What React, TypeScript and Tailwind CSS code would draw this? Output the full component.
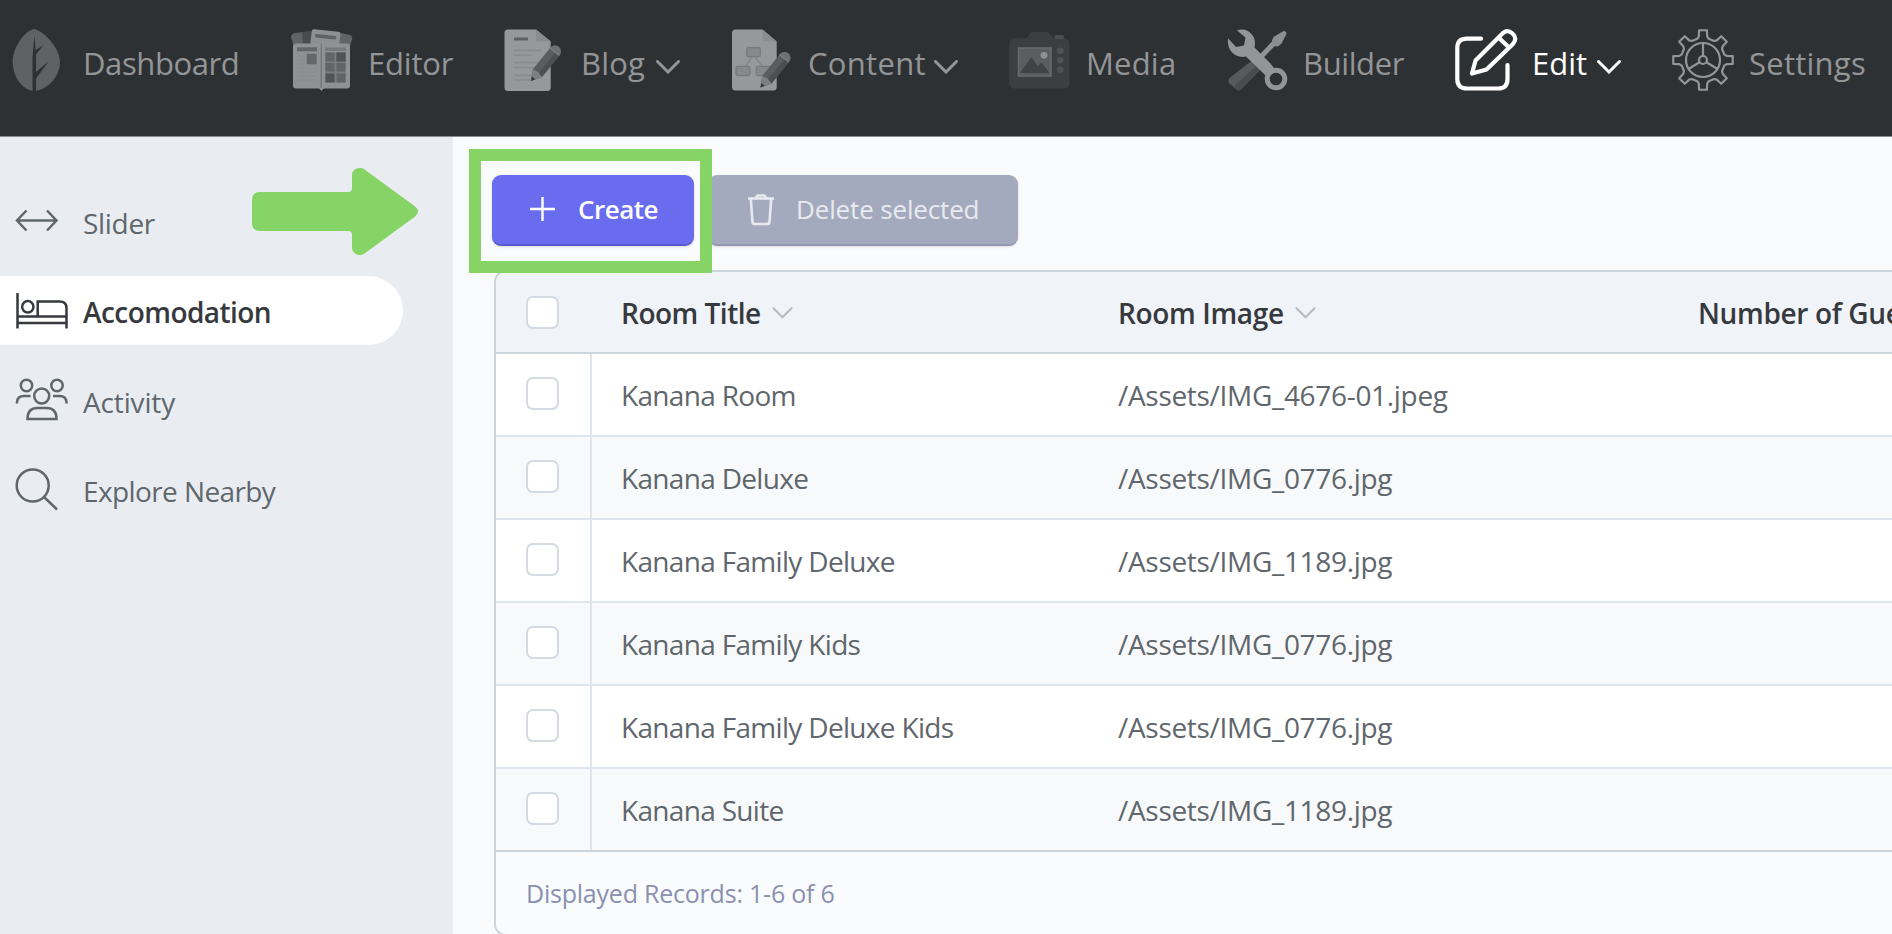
import type { ReactNode } from "react";

function Chevron({ className, weight = 3 }: { className?: string; weight?: number }) {
  return (
    <svg viewBox="0 0 24 14" fill="none" stroke="currentColor" strokeLinecap="round" className={className}>
      <path d="M1.5 1.5 12 12 22.500 1.5" strokeWidth={weight} />
    </svg>
  );
}

function Pencil({ x, y }: { x: number; y: number }) {
  return (
    <g transform={`translate(${x} ${y}) rotate(39)`}>
      <path d="M0 0 -6 -10V-38a6 6 0 0 1 12 0V-10Z" fill="#5b5c5f" />
      <path d="M1 -10V-38h5V-10Z" fill="#4d4e51" />
      <path d="M-6 -38a6 6 0 0 1 12 0Z" fill="#6f7073" />
      <path d="M-6 -37.500h12" stroke="#86878a" strokeWidth="1" />
      <path d="M0 0 -6 -10 0 -11.500 6 -10Z" fill="#7d7e81" />
      <path d="M0 0 -2.200 -4h4.400Z" fill="#333538" />
    </g>
  );
}

const leaf = (
  <path d="M28 1C38 3 54 20 54 34 54 48 43 60 30 63V50.500L43 33 30 44V26.500L37 17.500 29.600 22 28.300 7.500 26.500 30V63C15 60 6.700 48 6.700 34 6.700 20 18 3 28 1Z" fill="#606163" />
);

const editor = (
  <>
    <path d="M0 9Q0 6 4 5L18 3.500V17H2.500Z" fill="#626366" />
    <path d="M11 4.200 20 3V17H12Z" fill="#4a4b4e" />
    <path d="M48 4.500 59 7q2.500 1 2.200 4L59 18H48Z" fill="#626366" />
    <rect x="20" y="2.500" width="29" height="16" rx="2.500" fill="#8e8f91" transform="rotate(6 34 10)" />
    <rect x="24" y="7" width="21" height="3.500" rx="1" fill="#606164" transform="rotate(6 34 9)" />
    <rect x="2" y="15.500" width="57" height="45" rx="3" fill="#909193" />
    <path d="M28 60h5l-2.500 3Z" fill="#949597" />
    <path d="M30.300 15.500V60" stroke="#77787a" strokeWidth="1.500" />
    <rect x="6" y="19.300" width="20" height="4" fill="#656669" />
    <rect x="15.700" y="25.800" width="10" height="10.500" fill="#656669" />
    <path d="M6 28h8M6 32h8M6 36h8M6 40h20M6 44h20M6 48h20M6 52h20" stroke="#898a8c" strokeWidth="1" />
    <rect x="34" y="19.500" width="21" height="3.300" fill="#77787a" />
    <path d="M34 24.500h21v30h-21z" fill="#7c7d80" />
    <path d="M34.500 24.500h9v9h-9zM45.500 24.500h9v9h-9zM45.500 35h9v8.500h-9zM34.500 35h9v8.500h-9zM45.500 45.500h9v9h-9z" fill="#636467" />
    <path d="M34.500 45.500h9v9h-9zM45.500 24.500h9v9h-9z" fill="#525356" />
  </>
);

const blog = (
  <>
    <path d="M4 1.500H32L46.700 13.500V59.500a3.500 3.500 0 0 1-3.500 3.500H4A3.500 3.500 0 0 1 .5 59.500V5A3.500 3.500 0 0 1 4 1.500Z" fill="#979899" />
    <path d="M32 1.500V11q0 2.500 2.500 2.500H46.700Z" fill="#8b8c8e" />
    <path d="M10 11h14" stroke="#5f6062" strokeWidth="3" />
    <path d="M10 22.300h28M10 27.300h18M10 34.700h24M10 39.700h20M10 47.300h18M10 52h18" stroke="#8a8b8d" strokeWidth="1.700" />
    <Pencil x={27} y={53} />
  </>
);

const content = (
  <>
    <path d="M4.500 1.500H31.500L45.700 13.500V59a3.500 3.500 0 0 1-3.500 3.500H4.500A3.500 3.500 0 0 1 1 59V5A3.500 3.500 0 0 1 4.500 1.500Z" fill="#979899" />
    <path d="M31.500 1.500V11q0 2.500 2.500 2.500H45.700Z" fill="#8b8c8e" />
    <path d="M21 29 14 39M24 29 32 39" stroke="#7d7e80" strokeWidth="1.200" />
    <g fill="#87888a" stroke="#77787a" strokeWidth="1.200">
      <rect x="15.700" y="19.700" width="13.600" height="9" rx="1.800" />
      <rect x="5" y="38.300" width="14" height="9.300" rx="1.800" />
      <rect x="25.300" y="38.300" width="14" height="9.300" rx="1.800" />
    </g>
    <Pencil x={29.5} y={59.500} />
  </>
);

const media = (
  <>
    <path d="M6 10.300H17.500L21 5.500Q22 4 24 4H37.500Q39.500 4 40.500 5.500L44 10.300H54.500Q60.500 10.300 60.500 16V54.500Q60.500 60.500 54.500 60.500H6Q.3 60.500 .3 54.500V16Q.3 10.300 6 10.300Z" fill="#3d3e40" />
    <rect x="45.500" y="7" width="9.500" height="4" rx="1.500" fill="#4c4d4f" />
    <rect x="9.500" y="20" width="32.500" height="28" fill="#5c5d60" stroke="#68696b" strokeWidth="1.600" />
    <circle cx="35" cy="27.300" r="3.400" fill="#909193" />
    <path d="M11 45 22.500 29 29 38.500 32.500 34.500 40.500 45Z" fill="#414244" />
    <g fill="#505153">
      <circle cx="51.300" cy="22.700" r="3.300" />
      <circle cx="51.300" cy="32.200" r="3.300" />
      <circle cx="51.300" cy="41.500" r="3.300" />
    </g>
  </>
);

const builder = (
  <>
    <path d="M28 31 37 39 15.500 61q-2.500 2.500-5 .5L3.500 55.500q-2.500-2.500 0-5.500Z" fill="#58595b" />
    <path d="M33 35.500 37 39 15.500 61q-2.500 2.500-5 .5L7 59Z" fill="#4a4b4d" />
    <path d="M32 32 50 13" stroke="#919294" strokeWidth="5" />
    <path d="M46 12.500 47.500 9 57.500 3Q60.500 3 60.500 6L55.500 15.500 52 18.500 47.500 18Z" fill="#8d8e90" />
    <path d="M11 2.500C20 -1 29.500 6 29 16L28.500 19.500 44 35 48 40 40 48 34 42 20 28.500C10 31 .5 23 2 10.500L5 13.500 10 19 18 17.500 19.500 9.500 11 2.500Z" fill="#949597" />
    <circle cx="50" cy="51" r="8.800" fill="none" stroke="#949597" strokeWidth="5" />
  </>
);

const edit = (
  <g fill="none" stroke="currentColor" strokeWidth="4.200" strokeLinecap="round" strokeLinejoin="round">
    <path d="M26 10.700H12Q2.300 10.700 2.300 20V51Q2.300 60.500 12 60.500H43Q52.500 60.500 52.500 51V37" />
    <path d="M17 45.500 20.500 32.500 47 6Q52 .5 57.500 5.500 63 10.500 57.500 16.500L31.500 41.500Z" />
    <path d="M44 10 53.500 19" />
  </g>
);

const gearOutline = (() => {
  const parts: string[] = [];
  const at = (r: number, deg: number) => {
    const a = ((deg - 90) * Math.PI) / 180;
    return `${(31 + r * Math.cos(a)).toFixed(2)} ${(32 + r * Math.sin(a)).toFixed(2)}`;
  };
  for (let i = 0; i < 8; i++) {
    const c = i * 45;
    parts.push(`${i ? "L" : "M"}${at(22, c - 15)}L${at(24, c - 10)}L${at(30, c - 7.5)}L${at(30, c + 7.5)}L${at(24, c + 10)}L${at(22, c + 15)}`);
  }
  return parts.join("") + "Z";
})();

const settings = (
  <g fill="none" stroke="currentColor" strokeWidth="2.200" strokeLinejoin="round">
    <path d={gearOutline} />
    <circle cx="31" cy="32" r="17" />
    <circle cx="31" cy="32" r="4" />
    <path d="M31 15V28M27.500 34.200 16.500 41M34.500 34.200 45.500 41" />
  </g>
);

interface NavItem {
  label: string;
  icon: ReactNode;
  slot: string;
  text: string;
  chevron?: string;
  active?: boolean;
}

const navItems: NavItem[] = [
  { label: "Dashboard", icon: leaf, slot: "w-[285px]", text: "tracking-[-0.4px]" },
  { label: "Editor", icon: editor, slot: "w-[213px]", text: "tracking-[-0.2px]" },
  { label: "Blog", icon: blog, slot: "w-[227px]", text: "tracking-[0.2px]", chevron: "ml-[11px]" },
  { label: "Content", icon: content, slot: "w-[278px]", text: "tracking-[0.3px]", chevron: "ml-2" },
  { label: "Media", icon: media, slot: "w-[217px]", text: "tracking-[0.2px]" },
  { label: "Builder", icon: builder, slot: "w-[229px]", text: "tracking-[-0.4px]" },
  { label: "Edit", icon: edit, slot: "w-[217px]", text: "", chevron: "ml-2.5", active: true },
  { label: "Settings", icon: settings, slot: "w-[220px]", text: "tracking-[0.25px]" },
];

const sideItems = [
  {
    label: "Slider",
    text: "tracking-[-0.3px]",
    icon: <path d="M2 21.500H41.500M11.500 11.500 2 21.500 11.500 31.500M32 11.500 41.500 21.500 32 31.500" />,
  },
  {
    label: "Accomodation",
    text: "tracking-[-0.55px]",
    active: true,
    icon: (
      <>
        <path d="M2.500 4V39.500M51.500 39.500V19Q51.500 12.500 44.500 12.500H22.700V27.500M2.500 27.500H51.500M2.500 34H51.500" />
        <circle cx="12.800" cy="17.800" r="5.700" />
      </>
    ),
  },
  {
    label: "Activity",
    text: "tracking-[-0.15px]",
    icon: (
      <>
        <circle cx="11.500" cy="7.500" r="5.700" />
        <circle cx="42" cy="7.500" r="5.700" />
        <circle cx="26.700" cy="18" r="7.500" />
        <path d="M2 25.500V24Q2.500 18 9 18H15.500M51.500 25.500V24Q51 18 44.500 18H38M12.500 41H41.500Q41.500 30 31.500 30H22.500Q12.500 30 12.500 41Z" />
      </>
    ),
  },
  {
    label: "Explore Nearby",
    text: "tracking-[-0.6px]",
    icon: (
      <>
        <circle cx="17.700" cy="17.500" r="16" />
        <path d="M29 29 42 41.500" />
      </>
    ),
  },
];

const rows = [
  ["Kanana Room", "/Assets/IMG_4676-01.jpeg"],
  ["Kanana Deluxe", "/Assets/IMG_0776.jpg"],
  ["Kanana Family Deluxe", "/Assets/IMG_1189.jpg"],
  ["Kanana Family Kids", "/Assets/IMG_0776.jpg"],
  ["Kanana Family Deluxe Kids", "/Assets/IMG_0776.jpg"],
  ["Kanana Suite", "/Assets/IMG_1189.jpg"],
];

function Checkbox() {
  return <span className="block size-[33px] rounded-[7px] border-2 border-[#d5dae2] bg-white" />;
}

function TopNav() {
  return (
    <nav className="flex h-[137px] shrink-0 items-start overflow-hidden border-b border-[#8b8a8e] bg-[#2e3134] pt-7 pl-1.5">
      {navItems.map((item) => (
        <div
          key={item.label}
          className={`flex h-16 shrink-0 items-center ${item.slot} ${item.active ? "text-white" : "text-[#949597]"}`}
        >
          <svg viewBox="0 0 64 64" className="size-16 shrink-0 overflow-visible">
            {item.icon}
          </svg>
          <span className={`ml-[13px] pt-[5px] text-[31px] leading-10 ${item.text}`}>{item.label}</span>
          {item.chevron && <Chevron className={`mt-[13px] h-3.5 w-6 ${item.chevron}`} />}
        </div>
      ))}
    </nav>
  );
}

function Sidebar() {
  return (
    <aside className="relative w-[453px] shrink-0 bg-[#e9edf2] pt-[49.5px]">
      <ul className="flex flex-col gap-[20.500px]">
        {sideItems.map((item) => (
          <li
            key={item.label}
            className={`flex h-[69px] w-[403px] items-center pl-[15px] ${
              item.active ? "rounded-r-full bg-white font-semibold text-[#36393d]" : "text-[#5f676d]"
            }`}
          >
            <svg viewBox="0 0 54 44" fill="none" stroke="currentColor" strokeWidth="2.500" className="h-11 w-[54px] shrink-0">
              {item.icon}
            </svg>
            <span className={`ml-3.5 pt-[3px] text-[28px] leading-9 whitespace-nowrap ${item.text}`}>{item.label}</span>
          </li>
        ))}
      </ul>
      <svg viewBox="0 0 168 90" className="absolute top-[30px] left-[251px] h-[90px] w-[168px]">
        <path
          d="M9 25H97Q101 25 101 21V8C101 2 108 -1 113.500 2.500L163.500 39Q170.500 44.500 163.500 50L113.500 86.500C108 90 101 87 101 80V68Q101 64 97 64H9Q1 64 1 56V33Q1 25 9 25Z"
          fill="#86d466"
        />
      </svg>
    </aside>
  );
}

function HeaderCell({ label, text }: { label: string; text: string }) {
  return (
    <>
      <span className={`pt-0.5 ${text}`}>{label}</span>
      <Chevron weight={2.4} className="mt-0.5 ml-[11px] h-3 w-[21px] text-[#b7bbc0]" />
    </>
  );
}

function DataTable() {
  return (
    <div className="mt-6 ml-[41px] h-[666px] w-[1700px] rounded-xl border-2 border-[#ccd4dc] bg-white text-[28px] text-[#5f666c]">
      <div className="flex h-[82px] items-center rounded-t-[10px] border-b-2 border-[#ccd4dc] bg-[#f0f3f8] font-semibold whitespace-nowrap text-[#36393d]">
        <div className="w-24 pl-[30px]">
          <Checkbox />
        </div>
        <div className="flex w-[497px] items-center pl-[29px]">
          <HeaderCell label="Room Title" text="tracking-[-0.5px]" />
        </div>
        <div className="flex w-[580px] items-center pl-[29px]">
          <HeaderCell label="Room Image" text="tracking-[-0.35px]" />
        </div>
        <div className="pt-0.5 pl-[29px] tracking-[-0.35px]">Number of Guests</div>
      </div>
      {rows.map(([title, image], i) => (
        <div
          key={title}
          className={`flex h-[83px] border-b-2 ${i % 2 ? "bg-[#f7f9fb]" : "bg-white"} ${
            i === rows.length - 1 ? "border-[#ccd4dc]" : "border-[#dfe5ec]"
          }`}
        >
          <div className="flex w-24 items-center border-r-2 border-[#dfe5ec] pb-0.5 pl-[30px]">
            <Checkbox />
          </div>
          <div className="flex w-[497px] items-center pl-[29px] tracking-[-0.68px]">{title}</div>
          <div className="flex items-center pl-[29px] tracking-[-0.31px]">{image}</div>
        </div>
      ))}
      <div className="flex h-[82px] items-center rounded-b-[10px] bg-[#fafbfd] pt-0.5 pl-[30px] text-[25px] tracking-[-0.22px] text-[#8a90b0]">
        Displayed Records: 1-6 of 6
      </div>
    </div>
  );
}

export default function App() {
  return (
    <div className="flex h-[934px] w-full flex-col overflow-hidden bg-[#fafbfd] font-['Open_Sans','Noto_Sans',sans-serif]">
      <TopNav />
      <div className="flex min-h-0 flex-1">
        <Sidebar />
        <main className="relative min-w-0 flex-1 overflow-hidden pt-[38px]">
          <div className="flex gap-3.5 pl-[39px] text-[26px]">
            <button className="flex h-[71px] w-[202px] items-center rounded-[9px] border-b-2 border-[#5759cf] bg-[#6a6cef] pl-[38px] font-semibold text-white shadow-sm">
              <svg viewBox="0 0 25 25" className="size-[25px]" stroke="currentColor" strokeWidth="2.400">
                <path d="M0 12H25M12.500 0V24" />
              </svg>
              <span className="ml-[23px] tracking-[-0.5px]">Create</span>
            </button>
            <button className="flex h-[71px] w-[310px] items-center rounded-[9px] border-b-2 border-[#9298b0] bg-[#a4aabd] pl-10 whitespace-nowrap text-[#e8eaf0] shadow-sm">
              <svg viewBox="0 0 26 32" fill="none" className="h-8 w-[26px]" stroke="currentColor" strokeWidth="2.600" strokeLinejoin="round">
                <path d="M0 4.500H26M7.500 4.500 9.500 1.500H16.500L18.500 4.500M2.800 5 4.500 28Q4.700 30 7 30H19Q21.300 30 21.500 28L23.200 5" />
              </svg>
              <span className="ml-[22px] tracking-[-0.15px]">Delete selected</span>
            </button>
          </div>
          <DataTable />
          <div className="absolute top-3 left-4 h-[124px] w-[243px] border-12 border-[#86d466]" />
        </main>
      </div>
    </div>
  );
}
